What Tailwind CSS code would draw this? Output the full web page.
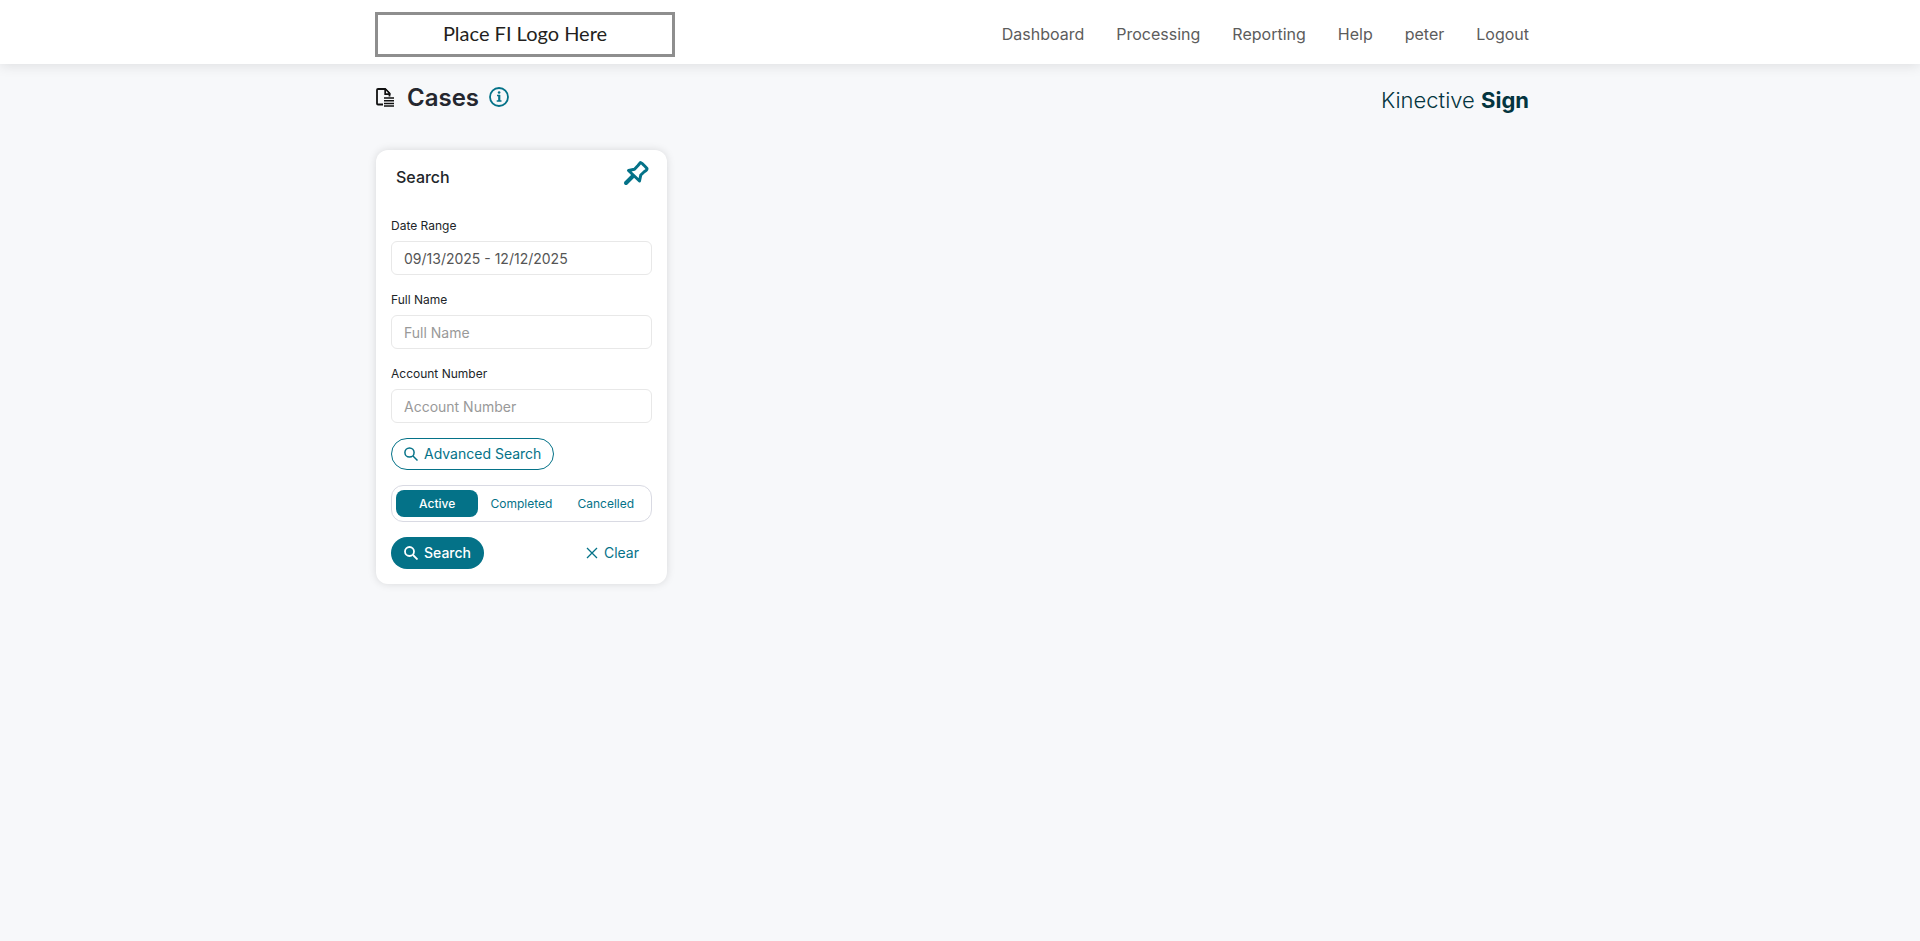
<!DOCTYPE html>
<html lang="en">
<head>
  <meta charset="UTF-8">
  <meta name="viewport" content="width=device-width, initial-scale=1.0">
  <title>Cases</title>
  <script src="https://cdn.jsdelivr.net/npm/@tailwindcss/browser@4"></script>
</head>
<body class="min-h-screen bg-[#f7f8fa] font-['Inter',sans-serif] text-[#212529]">

  <!-- Top bar -->
  <header class="relative bg-white shadow-[0_2px_12px_rgba(0,0,0,0.1)]">
    <div class="mx-auto flex h-16 max-w-[1170px] items-center justify-between pt-1 pr-4">
      <a href="#" class="flex h-[45px] w-[300px] items-center justify-center border-3 border-[#8e8e8e] pb-[2px] font-['Lato',sans-serif] text-[20px] text-[#231f20]">Place FI Logo Here</a>
      <nav class="flex gap-8 text-base text-[#5c5c5c]">
        <a href="#">Dashboard</a>
        <a href="#">Processing</a>
        <a href="#">Reporting</a>
        <a href="#">Help</a>
        <a href="#">peter</a>
        <a href="#">Logout</a>
      </nav>
    </div>
  </header>

  <main class="mx-auto max-w-[1170px]">
    <!-- Page title -->
    <div class="flex items-center justify-between pt-[14px] pr-4">
      <div class="flex items-center">
        <svg class="mb-[2px] h-5 w-5" viewBox="0 0 20 20" fill="none" stroke="#111">
          <path d="M8 17.500H3Q2 17.500 2 16.500V3Q2 2 3 2H10L14.500 6.500V9.500" stroke-width="1.800"/>
          <path d="M9.300 1.200H10.700L15.400 6V8H9.300Z" fill="#111" stroke="none"/>
          <path d="M11 3.800V6.200H13.400Z" fill="#f7f8fa" stroke="none"/>
          <path d="M9 11h10M9 13.700h10M9 16.400h10M9 19.100h10" stroke-width="1.500"/>
        </svg>
        <h1 class="ml-3 text-2xl font-semibold text-[#25272f]">Cases</h1>
        <button type="button" aria-label="About cases" class="mb-[2px] ml-[9px]">
          <svg class="h-[22px] w-[22px]" viewBox="0 0 22 22" fill="none" stroke="#047288">
            <circle cx="11" cy="11" r="9" stroke-width="1.800"/>
            <path d="M9 9.500h2.300V15M8.700 15h4.800" stroke-width="1.500"/>
            <path d="M11.300 9v6" stroke-width="2"/>
            <circle cx="11.100" cy="6.500" r="1.300" fill="#047288" stroke="none"/>
          </svg>
        </button>
      </div>
      <div class="pt-[6px] text-[22px] font-light text-[#04353f]">Kinective <span class="font-bold">Sign</span></div>
    </div>

    <!-- Search card -->
    <form class="mt-[33px] ml-px w-[291px] rounded-xl bg-white p-[15px] shadow-[0_0_8px_rgba(0,0,0,0.13)]">
      <div class="flex h-[52px] items-start justify-between pr-[2px] pl-[5px]">
        <h2 class="text-base font-medium">Search</h2>
        <button type="button" aria-label="Pin search">
          <svg class="-mt-[6px] h-7 w-7" viewBox="0 0 28 28" fill="none" stroke="#047288" stroke-width="3" stroke-linejoin="round" stroke-linecap="round">
            <path d="M18.500 3.500Q19.500 3.500 25 9.500Q25 11.500 22.500 12.500L18.800 16L17.500 22L6.500 11.500L12.500 10.200L16 6.500Z"/>
            <path d="M10.500 17.500L4 24" stroke-width="4"/>
          </svg>
        </button>
      </div>

      <div class="flex flex-col gap-4">
        <div>
          <label for="date-range" class="block text-xs leading-[18px]">Date Range</label>
          <input id="date-range" type="text" value="09/13/2025 - 12/12/2025" class="mt-[6px] block h-[34px] w-full rounded-md border border-[#e8e8e8] px-3 text-sm text-[#555]">
        </div>
        <div>
          <label for="full-name" class="block text-xs leading-[18px]">Full Name</label>
          <input id="full-name" type="text" placeholder="Full Name" class="mt-[6px] block h-[34px] w-full rounded-md border border-[#e8e8e8] px-3 text-sm placeholder:text-[#999]">
        </div>
        <div>
          <label for="account-number" class="block text-xs leading-[18px]">Account Number</label>
          <input id="account-number" type="text" placeholder="Account Number" class="mt-[6px] block h-[34px] w-full rounded-md border border-[#e8e8e8] px-3 text-sm placeholder:text-[#999]">
        </div>
      </div>

      <button type="button" class="mt-[15px] flex h-8 items-center gap-[6px] rounded-full border border-[#047288] px-3 text-sm text-[#047288]">
        <svg class="h-[14px] w-[14px]" viewBox="0 0 14 14" fill="none" stroke="currentColor" stroke-width="1.500">
          <circle cx="5.500" cy="5.500" r="4.600"/>
          <path d="M9 9l4.500 4.500"/>
        </svg>
        Advanced Search
      </button>

      <!-- Case status -->
      <div class="mt-[15px] grid h-[37px] grid-cols-3 gap-[2px] rounded-xl border border-[#d9dae3] p-1 text-xs text-[#047288]">
        <button type="button" aria-pressed="true" class="rounded-lg bg-[#047288] font-medium text-white">Active</button>
        <button type="button" aria-pressed="false" class="rounded-lg">Completed</button>
        <button type="button" aria-pressed="false" class="rounded-lg">Cancelled</button>
      </div>

      <div class="mt-[15px] flex justify-between text-sm">
        <button type="submit" class="flex h-8 items-center gap-[6px] rounded-full bg-[#047288] px-[13px] font-medium text-white">
          <svg class="h-[14px] w-[14px]" viewBox="0 0 14 14" fill="none" stroke="currentColor" stroke-width="1.800">
            <circle cx="5.500" cy="5.500" r="4.500"/>
            <path d="M9 9l4.500 4.500"/>
          </svg>
          Search
        </button>
        <button type="reset" class="flex h-8 items-center gap-[6px] px-[13px] text-[#047288]">
          <svg class="h-3 w-3" viewBox="0 0 12 12" fill="none" stroke="currentColor" stroke-width="1.300">
            <path d="M1 1l10 10M11 1L1 11"/>
          </svg>
          Clear
        </button>
      </div>
    </form>
  </main>
</body>
</html>
